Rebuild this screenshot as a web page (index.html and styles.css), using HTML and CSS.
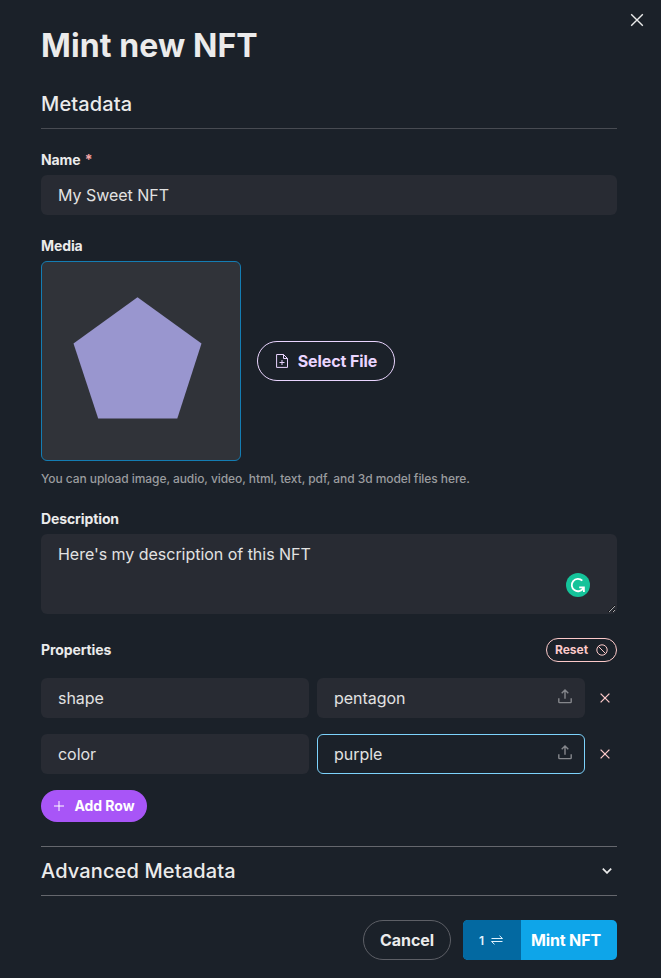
FILE: index.html
```html
<!DOCTYPE html>
<html lang="en">
<head>
<meta charset="utf-8">
<title>Mint new NFT</title>
<link rel="stylesheet" href="styles.css">
</head>
<body>
<main class="dialog">
  <button class="close" type="button" aria-label="Close">
    <svg width="14" height="14" viewBox="0 0 14 14"><path d="M1.2 1.2l11.6 11.6M12.8 1.2L1.2 12.8"/></svg>
  </button>
  <h1 class="title">Mint new NFT</h1>
  <h2 class="section">Metadata</h2>

  <label class="label name-label" for="name">Name <span class="required">*</span></label>
  <input class="input" id="name" type="text" value="My Sweet NFT">

  <div class="label media-label">Media</div>
  <div class="media">
    <div class="preview">
      <svg width="198" height="198" viewBox="0 0 198 198"><path d="M95.5 35.3L159.5 81.6L135.3 156.5H56.2L31.5 81.6Z"/></svg>
    </div>
    <button class="btn select" type="button">
      <svg width="14" height="16" viewBox="0 0 14 16"><path d="M1.6 1.5H8.5L12.5 5.5V14.4H1.6ZM8.5 1.5V5.5H12.5M7 7V12M4.5 9.5H9.5"/></svg>
      <span>Select File</span>
    </button>
  </div>
  <p class="hint">You can upload image, audio, video, html, text, pdf, and 3d model files here.</p>

  <label class="label desc-label" for="desc">Description</label>
  <div class="desc">
    <textarea class="input area" id="desc">Here's my description of this NFT</textarea>
    <svg class="assistant" width="24" height="24" viewBox="0 0 24 24"><circle cx="12" cy="12" r="12"/><path d="M16.3 7.6A6.2 6.2 0 1 0 17.3 15.2M13.2 14.3H17.9V19"/></svg>
  </div>

  <div class="props-head">
    <span class="label">Properties</span>
    <button class="btn reset" type="button">
      <span>Reset</span>
      <svg width="12" height="12" viewBox="0 0 12 12"><circle cx="6" cy="6" r="5.2"/><path d="M2.3 2.3L9.7 9.7"/></svg>
    </button>
  </div>
  <div class="row">
    <input class="input" type="text" value="shape" aria-label="Property">
    <div class="value">
      <input class="input" type="text" value="pentagon" aria-label="Value">
      <svg class="upload" width="14" height="15" viewBox="0 0 14 15"><path d="M.8 9.3V12.8Q.8 13.6 1.6 13.6H12.4Q13.2 13.6 13.2 12.8V9.3M7 9.8V1.2M3.7 4.3L7 1L10.3 4.3"/></svg>
    </div>
    <button class="remove" type="button" aria-label="Remove"><svg width="10" height="10" viewBox="0 0 10 10"><path d="M.6.6L9.4 9.4M9.4.6L.6 9.4"/></svg></button>
  </div>
  <div class="row">
    <input class="input" type="text" value="color" aria-label="Property">
    <div class="value">
      <input class="input active" type="text" value="purple" aria-label="Value">
      <svg class="upload" width="14" height="15" viewBox="0 0 14 15"><path d="M.8 9.3V12.8Q.8 13.6 1.6 13.6H12.4Q13.2 13.6 13.2 12.8V9.3M7 9.8V1.2M3.7 4.3L7 1L10.3 4.3"/></svg>
    </div>
    <button class="remove" type="button" aria-label="Remove"><svg width="10" height="10" viewBox="0 0 10 10"><path d="M.6.6L9.4 9.4M9.4.6L.6 9.4"/></svg></button>
  </div>
  <button class="btn add" type="button">
    <svg width="10" height="10" viewBox="0 0 10 10"><path d="M5 0V10M0 5H10"/></svg>
    <span>Add Row</span>
  </button>

  <div class="advanced">
    <span>Advanced Metadata</span>
    <svg width="10" height="6" viewBox="0 0 10 6"><path d="M.8.7L5 4.9L9.2.7"/></svg>
  </div>

  <div class="footer">
    <button class="btn cancel" type="button">Cancel</button>
    <button class="mint" type="button">
      <span class="count">1 <svg width="12" height="10" viewBox="0 0 12 10"><path d="M.5 3.5H11.5L8.5.7M11.5 6.5H.5L3.5 9.3"/></svg></span>
      <span class="mint-text">Mint NFT</span>
    </button>
  </div>
</main>
</body>
</html>
```

FILE: styles.css
```css
* { box-sizing: border-box; margin: 0; }
body {
  background: #1b2129;
  color: #ebebeb;
  font-family: Inter, sans-serif;
  font-size: 16px;
  overflow: hidden;
}
button, input, textarea { font: inherit; color: inherit; }
button { border: 0; padding: 0; background: none; }
svg { display: block; flex: none; fill: none; stroke: currentColor; }
.dialog {
  position: relative;
  display: flex;
  flex-direction: column;
  height: 978px;
  padding: 24px 44px 0 41px;
}
.close { position: absolute; top: 13px; right: 17px; }
.close svg { stroke-width: 1.4; }
.title { font-size: 32px; line-height: 43px; font-weight: 700; letter-spacing: .1px; }
.section {
  height: 39px;
  margin-top: 23px;
  border-bottom: 1px solid #484b52;
  font-size: 20px;
  line-height: 28px;
  font-weight: 500;
  letter-spacing: .14px;
}
.label { font-size: 14px; line-height: 20px; font-weight: 700; letter-spacing: -.11px; }
.name-label { margin: 21px 0 5px; }
.required { margin-left: 1px; color: #f6a5a5; }
.input {
  display: block;
  width: 100%;
  height: 40px;
  padding: 0 16px;
  border: 1px solid transparent;
  border-radius: 6px;
  outline: 0;
  background: #282b33;
  color: #e2e2e2;
  font-size: 16px;
  font-weight: 400;
  letter-spacing: -.03px;
}
.media-label { margin: 21px 0 5px; }
.media { display: flex; align-items: center; gap: 16px; }
.preview {
  width: 200px;
  height: 200px;
  border: 1px solid #147db3;
  border-radius: 6px;
  background: #303339;
}
.preview svg { fill: #9996cf; stroke: none; }
.btn {
  display: flex;
  align-items: center;
  justify-content: center;
  border: 1px solid;
  border-radius: 20px;
  font-weight: 700;
}
.select { width: 138px; height: 40px; gap: 9px; color: #ead5ff; font-size: 16px; letter-spacing: -.08px; }
.hint { margin-top: 8px; color: #9a9c9f; font-size: 12px; line-height: 20px; font-weight: 500; letter-spacing: -.065px; }
.desc-label { margin: 20px 0 5px; }
.desc { position: relative; }
.area { height: 80px; padding: 7px 16px; line-height: 24px; resize: vertical; }
.assistant { position: absolute; right: 27px; top: 39px; stroke: #fff; stroke-width: 1.8; }
.assistant circle { fill: #15c39a; stroke: none; }
.props-head { display: flex; justify-content: space-between; align-items: center; height: 24px; margin-top: 24px; }
.reset { width: 71px; height: 24px; gap: 8px; color: #fcc9c9; font-size: 12px; }
.reset span { margin-top: -1px; }
.row { display: grid; grid-template-columns: 268px 268px 1fr; column-gap: 8px; align-items: center; margin-top: 16px; }
.value { position: relative; }
.active { background: #1b2129; border-color: #7dd3fc; }
.upload { position: absolute; right: 13px; top: 11px; color: #85878c; stroke-width: 1.4; }
.remove { padding-left: 7px; color: #fcc9c9; }
.remove svg { stroke-width: 1.3; }
.add { align-self: flex-start; width: 106px; height: 32px; margin-top: 16px; gap: 10px; border: 0; background: #a855f7; color: #fff; font-size: 14px; letter-spacing: -.05px; }
.add svg { margin-left: 1px; }
.add span { margin-top: -1px; }
.advanced {
  display: flex;
  align-items: center;
  justify-content: space-between;
  height: 50px;
  margin-top: 24px;
  padding-right: 5px;
  border: solid #65676d;
  border-width: 1px 0;
  font-size: 20px;
  font-weight: 500;
  letter-spacing: .13px;
}
.advanced svg { stroke-width: 1.7; }
.footer { display: flex; justify-content: flex-end; gap: 12px; margin-top: 24px; font-size: 16px; letter-spacing: -.15px; }
.cancel { width: 88px; height: 40px; border-color: #5d5f66; color: #ebebeb; letter-spacing: -.1px; }
.mint { display: flex; width: 154px; height: 40px; border-radius: 5px; overflow: hidden; background: #0ea5e9; color: #fff; font-weight: 700; letter-spacing: -.15px; }
.count { display: flex; align-items: center; justify-content: center; gap: 7px; width: 58px; height: 40px; background: #0369a1; color: #e0f2fe; font-size: 12px; font-weight: 600; padding-right: 2px; }
.mint-text { padding-left: 10px; line-height: 40px; }
```
